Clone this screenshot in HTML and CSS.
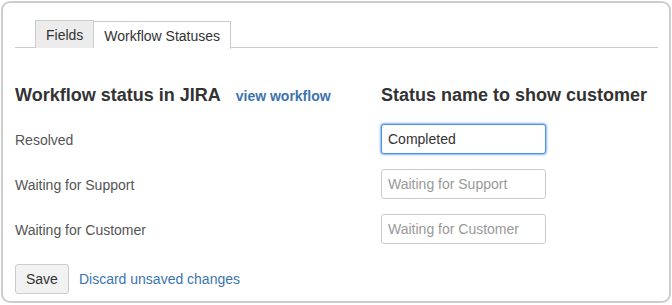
FILE: index.html
```html
<!DOCTYPE html>
<html>
<head>
<meta charset="utf-8">
<link rel="stylesheet" href="styles.css">
</head>
<body>
<div class="panel">
  <div class="tabs">
    <div class="tab">Fields</div>
    <div class="tab active">Workflow Statuses</div>
  </div>
  <div class="grid">
    <div class="head-left">
      <h2 class="heading">Workflow status in JIRA</h2>
      <a class="link bold" href="#">view workflow</a>
    </div>
    <h2 class="heading">Status name to show customer</h2>

    <div class="label">Resolved</div>
    <div class="cell"><input class="field focused" type="text" value="Completed" autofocus></div>

    <div class="label">Waiting for Support</div>
    <div class="cell"><input class="field" type="text" placeholder="Waiting for Support"></div>

    <div class="label">Waiting for Customer</div>
    <div class="cell"><input class="field" type="text" placeholder="Waiting for Customer"></div>
  </div>
  <div class="actions">
    <button class="btn">Save</button>
    <a class="link" href="#">Discard unsaved changes</a>
  </div>
</div>
</body>
</html>
```

FILE: styles.css
```css
* { box-sizing: border-box; }
html, body { margin: 0; padding: 0; background: #fff; }
body {
  font-family: "Liberation Sans", Arial, sans-serif;
  font-size: 14px;
  color: #333;
  padding: 1px;
}
.panel {
  width: 670px;
  height: 302px;
  border: 2px solid #cdcdcd;
  border-radius: 9px;
  padding: 17px 11px 0 12px;
}
.tabs {
  display: flex;
  border-bottom: 1px solid #ccc;
  padding-left: 20px;
  height: 28px;
}
.tab {
  height: 28px;
  line-height: 29px;
  padding: 0 10px;
  border: 1px solid #ccc;
  border-bottom: none;
  background: #ececec;
  color: #333;
  font-size: 14px;
}
.tab.active {
  background: #fff;
  border-left: none;
  position: relative;
  top: 1px;
}
.grid {
  display: grid;
  grid-template-columns: 366px 1fr;
  row-gap: 15px;
  margin-top: 36px;
  align-items: center;
}
.head-left {
  display: flex;
  align-items: baseline;
  gap: 15px;
}
.heading {
  margin: 0 0 3px;
  font-size: 18px;
  line-height: 22px;
  font-weight: bold;
  color: #333;
}
.link {
  color: #3b73af;
  text-decoration: none;
  font-size: 14px;
}
.link.bold { font-weight: bold; }
.label {
  color: #555;
  font-size: 14px;
  padding-top: 1px;
}
.cell { display: flex; }
.field {
  width: 165px;
  height: 30px;
  border: 1px solid #ccc;
  border-radius: 3px;
  padding: 0 6px;
  font-family: "Liberation Sans", Arial, sans-serif;
  font-size: 14px;
  color: #333;
  outline: none;
  background: #fff;
}
.field::placeholder { color: #999; }
.field.focused {
  border-color: #4d90e8;
  box-shadow: 0 0 2px 1px #8ab8f2;
  caret-color: #333;
}
.actions {
  display: flex;
  align-items: center;
  gap: 10px;
  margin-top: 20px;
}
.btn {
  height: 30px;
  padding: 0 10px;
  border: 1px solid #ccc;
  border-radius: 3px;
  background: #f2f2f2;
  color: #333;
  font-family: "Liberation Sans", Arial, sans-serif;
  font-size: 14px;
}
```
